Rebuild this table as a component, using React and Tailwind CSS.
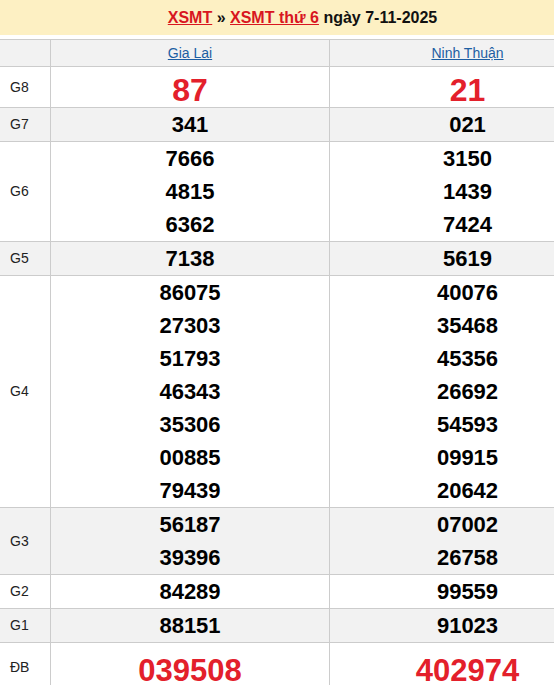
const rows = [
  { label: "G8", a: ["87"], b: ["21"], big: true },
  { label: "G7", a: ["341"], b: ["021"] },
  { label: "G6", a: ["7666", "4815", "6362"], b: ["3150", "1439", "7424"] },
  { label: "G5", a: ["7138"], b: ["5619"] },
  {
    label: "G4",
    a: ["86075", "27303", "51793", "46343", "35306", "00885", "79439"],
    b: ["40076", "35468", "45356", "26692", "54593", "09915", "20642"],
  },
  { label: "G3", a: ["56187", "39396"], b: ["07002", "26758"] },
  { label: "G2", a: ["84289"], b: ["99559"] },
  { label: "G1", a: ["88151"], b: ["91023"] },
  { label: "ĐB", a: ["039508"], b: ["402974"], special: true },
];

function Numbers({ items, row }) {
  if (row.big) {
    return (
      <div className="pt-[6px] leading-[34px] text-[32px] font-bold text-[#e3202b]">
        {items[0]}
      </div>
    );
  }
  if (row.special) {
    return (
      <div className="pt-[8px] leading-[40px] text-[31px] font-bold text-[#e3202b]">
        {items[0]}
      </div>
    );
  }
  return (
    <div className="flex flex-col">
      {items.map((n, i) => (
        <div key={i} className="leading-[33px] text-[22px] font-bold text-black">
          {n}
        </div>
      ))}
    </div>
  );
}

export default function App() {
  return (
    <div
      className="w-[554px] h-[685px] overflow-hidden bg-white"
      style={{ fontFamily: '"Liberation Sans", Arial, sans-serif' }}
    >
      <div className="w-[605px]">
        {/* Tiêu đề */}
        <div className="h-[35px] bg-[#fdf0c3] text-center leading-[35px] text-[16px] font-bold text-[#111]">
          <a href="#" className="text-[#d8161f] underline">XSMT</a>
          {" » "}
          <a href="#" className="text-[#d8161f] underline">XSMT thứ 6</a>
          {" ngày 7-11-2025"}
        </div>

        {/* Bảng kết quả */}
        <div className="mt-[4px] border-t border-[#cccccc]">
          <div className="grid grid-cols-[50px_279px_1fr] bg-[#f2f2f2] border-b border-[#cccccc]">
            <div />
            <div className="border-l border-[#cccccc] text-center leading-[26px] text-[14px]">
              <a href="#" className="text-[#1d5ea3] underline">Gia Lai</a>
            </div>
            <div className="border-l border-[#cccccc] text-center leading-[26px] text-[14px]">
              <a href="#" className="text-[#1d5ea3] underline">Ninh Thuận</a>
            </div>
          </div>

          {rows.map((row, i) => (
            <div
              key={row.label}
              className={`grid grid-cols-[50px_279px_1fr] border-b border-[#cccccc] ${
                i % 2 === 1 ? "bg-[#f2f2f2]" : "bg-white"
              }`}
            >
              <div className="flex items-center pl-[10px] text-[14px] text-[#222]">
                {row.label}
              </div>
              <div className="border-l border-[#cccccc] text-center">
                <Numbers items={row.a} row={row} />
              </div>
              <div className="border-l border-[#cccccc] text-center">
                <Numbers items={row.b} row={row} />
              </div>
            </div>
          ))}
        </div>
      </div>
    </div>
  );
}
